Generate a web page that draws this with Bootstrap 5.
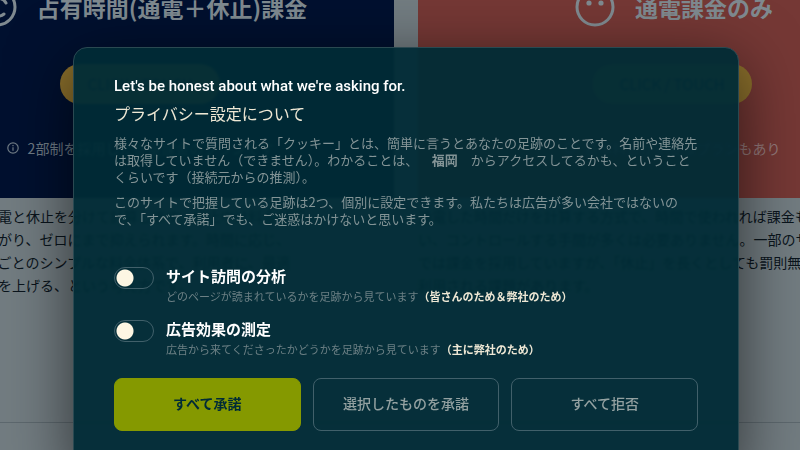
<!DOCTYPE html>
<html lang="ja">
<head>
<meta charset="utf-8">
<meta name="viewport" content="width=device-width, initial-scale=1">
<title>プライバシー設定について</title>
<link href="https://cdn.jsdelivr.net/npm/bootstrap@5.3.0/dist/css/bootstrap.min.css" rel="stylesheet">
<style>
body{font-family:"Noto Sans CJK JP",sans-serif;font-size:14px;background:#727c81;color:#0a141c;overflow:hidden}
.page-body{height:100vh;overflow:hidden}
.plans-wrap{padding-left:12px}
.plans{width:1040px;gap:24px}
.plan-col{flex:1 1 0;min-width:0}
.plan-head{height:198px;color:#7f8a90}
.plan-navy{background:#00102f}
.plan-red{background:#753835}
.plan-title{gap:20px;margin-top:-13px;padding-left:4px;height:40px}
.plan-title h2{font-size:23px;line-height:36px;font-weight:700;margin:0;white-space:nowrap}
.plan-cta{width:160px;height:40px;margin-top:37px;border-radius:20px;background:#8c702c;color:#10202a;font-size:15px;line-height:38px;padding:0;border:0}
.plan-note{margin-top:34px;line-height:20px;gap:9px;color:#6f7b85;white-space:nowrap}
.plan-red .plan-note{color:#93797a}
.plan-text{line-height:23px;margin:7px 0 0;white-space:nowrap}
.rule{border-top:1px solid #5d686e;margin-top:125px}
.consent-layer{position:fixed;inset:0;padding-left:12px;padding-top:47px;overflow:hidden}
.consent{width:100%;max-width:666px;padding:28px 40px 40px;border:1px solid #2a4951;border-radius:14px;background:rgba(0,43,54,.95);-webkit-backdrop-filter:blur(1px);backdrop-filter:blur(1px);box-shadow:0 16px 64px rgba(0,0,0,.6);color:#839496;font-size:13px;line-height:17px}
.consent-lead{font-family:Roboto,"Noto Sans CJK JP",sans-serif;font-size:15px;line-height:20px;font-weight:500;color:#fff;margin:0}
.consent h1{font-size:16px;line-height:24px;font-weight:400;color:#eee8d5;margin:5px 0 9px}
.consent .body-copy{margin:0 -2px 8px 0}
.city{margin-left:7px}
.options{margin-top:38px}
.option{gap:12px;height:53px}
.form-switch .form-check-input.toggle{width:40px;height:22px;margin:2px 0 0;float:none;border:1px solid #41606a;background-color:transparent;background-size:20px;background-position:left center;background-image:radial-gradient(circle at center,#fdf6e3 8px,transparent 9px);background-repeat:no-repeat}
.form-switch .form-check-input.toggle:checked{background-position:right center;background-color:#859900}
.option-name{font-size:15px;line-height:22px;font-weight:700;color:#fff}
.option-note{font-size:11px;line-height:18px;color:#6c8085}
.option-note b{color:#eee8d5}
.choices{gap:12px;margin-top:7px}
.choice{flex:1 1 0;height:53px;border-radius:8px;font-size:14px;font-weight:500;border:1px solid #41606a;color:#93a1a1;padding:0 0 3px}
.choice-main{background:#859900;border-color:#859900;color:#002b36;font-weight:700}
</style>
</head>
<body>
<main class="page-body">
  <div class="plans-wrap d-flex justify-content-center">
    <div class="plans d-flex flex-shrink-0">
      <section class="plan-col">
        <div class="plan-head plan-navy d-flex flex-column align-items-center">
          <div class="plan-title d-flex align-items-center">
            <svg width="40" height="40" viewBox="0 0 40 40" fill="none" stroke="currentColor" stroke-width="3" stroke-linecap="round" aria-hidden="true"><circle cx="20" cy="20" r="18"/><path d="M29 16a9 9 0 1 0-2 11"/></svg>
            <h2>占有時間(通電＋休止)課金</h2>
          </div>
          <button class="btn plan-cta" type="button">CLICK / TOUCH</button>
          <div class="plan-note d-flex align-items-center">
            <svg width="12" height="12" viewBox="0 0 12 12" fill="none" stroke="currentColor" stroke-width="1.2" aria-hidden="true"><circle cx="6" cy="6" r="5.2"/><path d="M6 5.3v3.5M6 3v1.3"/></svg>
            <span>2部制を採用した従量課金のプランです</span>
          </div>
        </div>
        <p class="plan-text">利用時間のうち通電と休止を分けて計算します。休止中は料金が下<br>使わない時間は下がり、ゼロにまで抑えられます。時間に応じ、<br>シンプルに時間帯ごとのシンプルな料金体系で、利用者に、最適<br>な形で利用の効率を上げる、という考え方です。</p>
      </section>
      <section class="plan-col">
        <div class="plan-head plan-red d-flex flex-column align-items-center">
          <div class="plan-title d-flex align-items-center">
            <svg width="40" height="40" viewBox="0 0 40 40" fill="none" stroke="currentColor" stroke-width="3" aria-hidden="true"><circle cx="20" cy="20" r="18"/><g fill="currentColor" stroke="none"><circle cx="14" cy="16" r="2.6"/><circle cx="26" cy="16" r="2.6"/></g></svg>
            <h2>通電課金のみ</h2>
          </div>
          <button class="btn plan-cta" type="button">CLICK / TOUCH</button>
          <div class="plan-note d-flex align-items-center">
            <svg width="12" height="12" viewBox="0 0 12 12" fill="none" stroke="currentColor" stroke-width="1.2" aria-hidden="true"><circle cx="6" cy="6" r="5.2"/><path d="M6 5.3v3.5M6 3v1.3"/></svg>
            <span>基本料金が不要なプランもあり</span>
          </div>
        </div>
        <p class="plan-text">通電した時間だけを計算する方式で、時間で使われれば課金も行<br>い、コントロールする手間が多くは必要ありません。一部のサービス<br>では課金を採用していますが、「休止」を長くとしても罰則無しで<br>利用される課題があります。</p>
      </section>
    </div>
  </div>
  <div class="rule"></div>
</main>

<div class="consent-layer d-flex justify-content-center align-items-start">
  <form class="consent" role="dialog" aria-labelledby="consent-title">
    <p class="consent-lead">Let's be honest about what we're asking for.</p>
    <h1 id="consent-title">プライバシー設定について</h1>
    <p class="body-copy">様々なサイトで質問される「クッキー」とは、簡単に言うとあなたの足跡のことです。名前や連絡先は取得していません（できません）。わかることは、　<b class="city">福岡</b>　からアクセスしてるかも、ということくらいです（接続元からの推測）。</p>
    <p class="body-copy">このサイトで把握している足跡は2つ、個別に設定できます。私たちは広告が多い会社ではないので、「すべて承諾」でも、ご迷惑はかけないと思います。</p>
    <div class="options">
      <div class="option form-switch d-flex p-0">
        <input class="form-check-input toggle flex-shrink-0" type="checkbox" role="switch" id="opt-visit">
        <label for="opt-visit"><span class="option-name d-block">サイト訪問の分析</span><span class="option-note d-block">どのページが読まれているかを足跡から見ています<b>（皆さんのため＆弊社のため）</b></span></label>
      </div>
      <div class="option form-switch d-flex p-0">
        <input class="form-check-input toggle flex-shrink-0" type="checkbox" role="switch" id="opt-ads">
        <label for="opt-ads"><span class="option-name d-block">広告効果の測定</span><span class="option-note d-block">広告から来てくださったかどうかを足跡から見ています<b>（主に弊社のため）</b></span></label>
      </div>
    </div>
    <div class="choices d-flex">
      <button class="btn choice choice-main" type="button">すべて承諾</button>
      <button class="btn choice" type="button">選択したものを承諾</button>
      <button class="btn choice" type="button">すべて拒否</button>
    </div>
  </form>
</div>
<script src="https://cdn.jsdelivr.net/npm/bootstrap@5.3.0/dist/js/bootstrap.bundle.min.js"></script>
</body>
</html>
